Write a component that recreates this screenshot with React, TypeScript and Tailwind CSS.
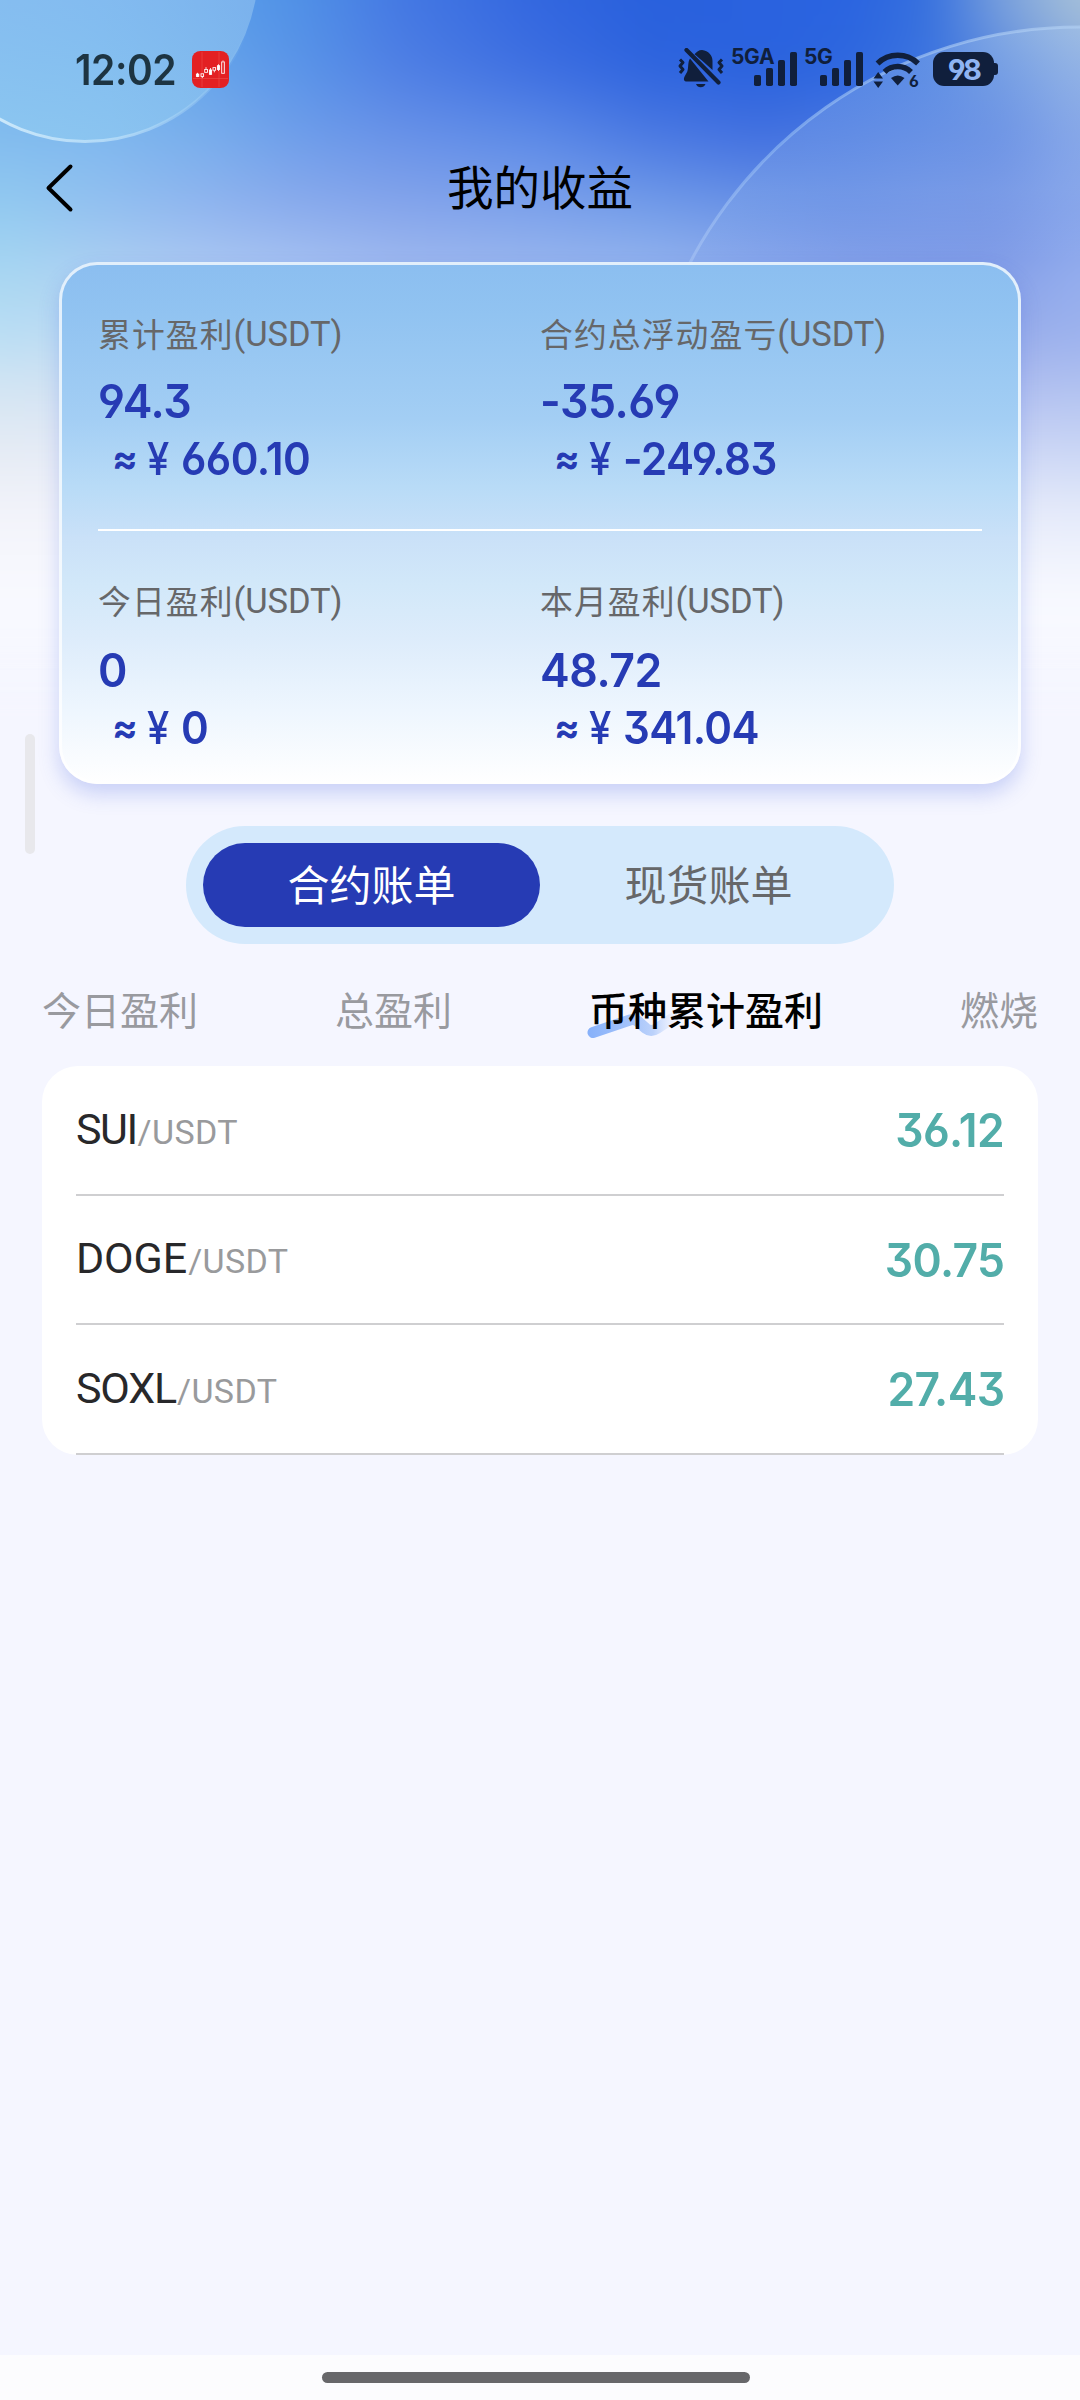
import React from "react";

// Colour rows of the header backdrop: each row is a horizontal gradient placed at height y.
const xs = [0, 100, 200, 300, 400, 540, 650, 760, 850, 930, 1000, 1080];
const rows: { y: number; c: string[] }[] = [
  { y: 0, c: ["#6aaeee", "#64aaee", "#5a9fea", "#5090e6", "#4478e3", "#3266df", "#2860dc", "#2a62df", "#2a64e0", "#3670de", "#79a0dd", "#a8c2d8"] },
  { y: 68, c: ["#74b4ee", "#70b2ee", "#68a6ea", "#5a94e8", "#4f7fe4", "#3d6ee1", "#2e64de", "#2a62de", "#2e67df", "#3c74df", "#5c8ade", "#88a9e0"] },
  { y: 136, c: ["#82bcee", "#80b8ee", "#78aeec", "#6e9dea", "#6892e8", "#5c8ae7", "#4b79e2", "#4270e0", "#4877e1", "#507de1", "#5780e1", "#7b9ce6"] },
  { y: 205, c: ["#92caf0", "#92c0f0", "#90b5ef", "#89aaec", "#84a4eb", "#7ca1eb", "#729ce9", "#6992e6", "#668de5", "#6d90e5", "#7090e4", "#819fea"] },
  { y: 268, c: ["#a6d6f2", "#accff2", "#abc8f2", "#a6c2f2", "#9fb9ef", "#98b6ee", "#94b4ee", "#8ca9ec", "#86a2e9", "#829ee8", "#829de7", "#94aeee"] },
  { y: 335, c: ["#badef3", "#bcdaf3", "#b8d0f2", "#b4c8f2", "#b0c4f2", "#a8c0f2", "#a4bcf0", "#9cb4ee", "#94acec", "#92a8ea", "#98ace9", "#9cb2ee"] },
  { y: 390, c: ["#d4e5f3", "#d4e3f3", "#d0e0f4", "#d0dcf4", "#ccd8f4", "#c8d6f4", "#c4d4f4", "#c0d0f4", "#bccaf2", "#b8c4f0", "#b2c0f0", "#b2c2f0"] },
  { y: 450, c: ["#e5ebf4", "#e6ebf6", "#e4eaf6", "#e4e8f6", "#e2e8f6", "#e0e8f6", "#dce6f6", "#d8e2f6", "#d4def6", "#d0daf4", "#ccd6f5", "#cad6f5"] },
  { y: 510, c: ["#f2f3fa", "#f2f3fa", "#f2f3fa", "#f2f3fa", "#f2f3fa", "#f0f3fa", "#f0f3fa", "#ecf0fa", "#eaeefa", "#e8edfa", "#e6ebfa", "#e4eafa"] },
  { y: 600, c: Array(12).fill("#f9faff") },
  { y: 680, c: Array(12).fill("#f5f6ff") },
];

function Backdrop() {
  return (
    <svg className="absolute left-0 top-0" width="1080" height="720" viewBox="0 0 1080 720" aria-hidden="true">
      <defs>
        {rows.map((r, i) => {
          const next = rows[i + 1]?.y ?? 720;
          return (
            <React.Fragment key={i}>
              <linearGradient id={`row${i}`} gradientUnits="userSpaceOnUse" x1="0" x2="1080" y1="0" y2="0">
                {r.c.map((c, k) => (
                  <stop key={k} offset={xs[k] / 1080} stopColor={c} />
                ))}
              </linearGradient>
              <linearGradient id={`fade${i}`} gradientUnits="userSpaceOnUse" x1="0" x2="0" y1={r.y} y2={next}>
                <stop offset="0" stopColor="#fff" stopOpacity="1" />
                <stop offset="1" stopColor="#fff" stopOpacity="0" />
              </linearGradient>
              <mask id={`mask${i}`} maskUnits="userSpaceOnUse" x="-120" y="-120" width="1320" height="960" style={{ maskType: "alpha" }}>
                <rect x="-120" y="-120" width="1320" height="960" fill={`url(#fade${i})`} />
              </mask>
            </React.Fragment>
          );
        })}
        <filter id="soft" filterUnits="userSpaceOnUse" x="-120" y="-120" width="1320" height="960" colorInterpolationFilters="sRGB">
          <feGaussianBlur stdDeviation="22" />
        </filter>
        <linearGradient id="ringL" gradientUnits="userSpaceOnUse" x1="0" y1="120" x2="250" y2="40">
          <stop offset="0" stopColor="#d2ecfc" stopOpacity="0.9" />
          <stop offset="0.45" stopColor="#bce0f9" stopOpacity="0.7" />
          <stop offset="1" stopColor="#a0d0f5" stopOpacity="0" />
        </linearGradient>
        <linearGradient id="fillL" gradientUnits="userSpaceOnUse" x1="0" y1="0" x2="0" y2="143">
          <stop offset="0" stopColor="#a0ccf2" stopOpacity="0.5" />
          <stop offset="1" stopColor="#94d0f2" stopOpacity="0.5" />
        </linearGradient>
        <linearGradient id="ringR" gradientUnits="userSpaceOnUse" x1="0" y1="27" x2="0" y2="262">
          <stop offset="0" stopColor="#b4d2f5" stopOpacity="0.6" />
          <stop offset="0.5" stopColor="#8ab4f2" stopOpacity="0.7" />
          <stop offset="1" stopColor="#c0d8fa" stopOpacity="0.35" />
        </linearGradient>
        <linearGradient id="fillR" gradientUnits="userSpaceOnUse" x1="0" y1="27" x2="0" y2="260">
          <stop offset="0" stopColor="#a8c8f0" stopOpacity="0.35" />
          <stop offset="0.7" stopColor="#a8c8f0" stopOpacity="0.22" />
          <stop offset="1" stopColor="#a8c8f0" stopOpacity="0" />
        </linearGradient>
      </defs>
      <g filter="url(#soft)">
        {rows
          .map((_, i) => <rect key={i} x="-120" y="-120" width="1320" height="960" fill={`url(#row${i})`} mask={`url(#mask${i})`} />)
          .reverse()}
        <rect x="-120" y="720" width="1320" height="120" fill="#f5f6ff" />
      </g>
      <circle cx="85" cy="-32" r="173.500" fill="url(#fillL)" stroke="url(#ringL)" strokeWidth="3" />
      <circle cx="1080" cy="467" r="440" fill="url(#fillR)" />
      <path d="M665 320 A440 440 0 0 1 1080 27" fill="none" stroke="url(#ringR)" strokeWidth="3" />
    </svg>
  );
}

const ink = "#101f3c";

function Bars() {
  return (
    <svg width="43" height="34" viewBox="0 0 43 34" fill={ink}>
      <rect x="0" y="23" width="7" height="11" rx="1.8" />
      <rect x="12" y="16" width="7" height="18" rx="1.8" />
      <rect x="24" y="8" width="7" height="26" rx="1.8" />
      <rect x="36" y="0" width="7" height="34" rx="1.8" />
    </svg>
  );
}

function StatusBar() {
  return (
    <div className="flex h-[138px] items-start pl-[75px] pr-[82px] pt-[48px]">
      <span className="-mt-[2px] w-[117px] origin-left scale-x-[0.93] whitespace-nowrap font-['Inter'] text-[42px] font-semibold leading-[47px] tracking-[-0.5px] text-[#1d3442]">12:02</span>
      <svg className="mt-[3px]" width="37" height="37" viewBox="0 0 37 39" preserveAspectRatio="none">
        <rect width="37" height="39" rx="8.5" fill="#e32023" />
        <g stroke="#f0655f" strokeWidth="0.6" opacity="0.7">
          <path d="M10 1V38M27 1V38M1 29H36" />
        </g>
        <g fill="#fff" stroke="#fff" strokeWidth="0.9">
          <path d="M5.500 23V27.500M18.500 18V25M26.500 14V21" />
          <rect x="4.400" y="24.300" width="2.400" height="2.600" />
          <rect x="17.400" y="20" width="2.200" height="4.600" />
          <rect x="25.400" y="15.500" width="2.200" height="4" />
          <g fill="none">
            <rect x="9" y="24" width="2.600" height="2.800" />
            <rect x="12.700" y="19.500" width="2.800" height="3" />
            <rect x="21" y="17.500" width="2.600" height="2.800" />
            <rect x="29.700" y="11.500" width="2.600" height="12" />
            <path d="M14 17V19M22.300 20.500V22.500M10.300 27V28.500M31 10V11" />
          </g>
        </g>
      </svg>
      <div className="ml-auto flex items-start">
        <svg width="46" height="40" viewBox="0 0 46 40" fill={ink}>
          <path d="M12 10.500C9.500 14 10.800 20 9.200 23.800L6.600 28.500C5.200 31.500 6 33.500 9 33.500H30.500Z" />
          <path d="M16.500 6.200C19 4 20.500 2 24 2C30.500 3 34.500 7 34.500 13V22C31 18.500 22 10.800 16.500 6.200Z" />
          <path d="M18 36H27.500C26.500 38.300 25 39.300 22.700 39.300S19 38.300 18 36Z" />
          <path d="M8.500 2L40.500 34.500" stroke={ink} strokeWidth="4.200" strokeLinecap="round" />
          <path d="M2 11.500L5 14.500L2 18L5 21.500L2 25" fill="none" stroke={ink} strokeWidth="3" strokeLinejoin="round" />
          <path d="M44 11.500L41 14.500L44 18L41 21.500L44 25" fill="none" stroke={ink} strokeWidth="3" strokeLinejoin="round" />
        </svg>
        <div className="relative ml-[30px] mt-[4px] h-[34px]">
          <span className="absolute -left-[23px] -top-[7px] whitespace-nowrap font-['Inter'] text-[21px] font-bold leading-[24px] tracking-[-0.3px] text-[#101f3c]">5GA</span>
          <Bars />
        </div>
        <div className="relative ml-[23px] mt-[4px] h-[34px]">
          <span className="absolute -left-[16px] -top-[7px] font-['Inter'] text-[21px] font-bold leading-[24px] tracking-[-0.5px] text-[#101f3c]">5G</span>
          <Bars />
        </div>
        <svg className="ml-[10px] mt-[4px] overflow-visible" width="50" height="40" viewBox="0 0 50 40" fill={ink}>
          <path d="M4.500 11.500A29 29 0 0 1 45 11.500" fill="none" stroke={ink} strokeWidth="5.500" />
          <path d="M11.500 20A19 19 0 0 1 38 20" fill="none" stroke={ink} strokeWidth="5.500" />
          <path d="M18 26Q24.700 21 31.500 26L24.700 33.500Z" />
          <path d="M0.500 26.500L5.200 20L10 26.500ZM0.500 29.500L5.200 36L10 29.500Z" />
          <text x="36" y="35" fontFamily="Inter" fontWeight="700" fontSize="16" className="[font-feature-settings:'cv03']">6</text>
        </svg>
        <div className="ml-[10px] mt-[4px] flex items-center">
          <div className="flex h-[34px] w-[61px] items-center justify-center rounded-[11px] bg-[#101f3c] font-['Inter'] text-[29px] font-bold leading-none tracking-[-2.500px] text-[#8fb4f2] [font-feature-settings:'cv04']">98</div>
          <div className="h-[12px] w-[4px] rounded-r-[3px] bg-[#101f3c]" />
        </div>
      </div>
    </div>
  );
}

const num = "font-['Inter'] font-semibold [font-feature-settings:'cv03','cv04','cv09']";

function Stat({ label, value, cny, gap }: { label: string; value: string; cny: string; gap: string }) {
  return (
    <div className="flex flex-col text-[#263bb4]">
      <div className="flex h-[44px] items-center whitespace-nowrap text-[32.800px] leading-[44px] tracking-[1.100px] text-[#666769]">
        {label}
        <span className="pt-px font-['Roboto'] text-[34.500px] tracking-[-0.100px]">(USDT)</span>
      </div>
      <div className={gap}>
        <div className={`${num} h-[60px] origin-left scale-x-[0.96] whitespace-pre text-[46.500px] leading-[60px] tracking-[-0.500px]`}>{value}</div>
      </div>
      <div className={`${num} flex h-[60px] items-center whitespace-nowrap pl-[14px] text-[45.500px] leading-[60px]`}>
        <span className="-mt-[2px] w-[35px] text-[38px] font-bold">≈</span>
        <span className="w-[34px] origin-left scale-x-[0.88] font-medium">¥</span>
        <span className="origin-left scale-x-[0.925] tracking-[-0.600px]">{cny}</span>
      </div>
    </div>
  );
}

function Card() {
  return (
    <section className="mx-[59px] h-[522px] rounded-[38px] border-[3px] border-white/75 bg-[linear-gradient(180deg,#8bbef0_0%,#91c3f1_10%,#a3cef4_30%,#b8dbf7_43%,#cae1f8_53%,#d2e8f9_62%,#ddecfb_72%,#eef6fe_86%,#ffffff_100%)] bg-origin-border px-[36px] pt-[46px] shadow-[0_10px_20px_rgba(70,100,225,0.25)]">
      <div className="grid grid-cols-2 border-b-[2px] border-white pb-[40px]">
        <Stat label="累计盈利" value="94.3" cny="660.10" gap="mt-[16px] h-[58px]" />
        <Stat label="合约总浮动盈亏" value="-35.69" cny="-249.83" gap="mt-[16px] h-[58px]" />
      </div>
      <div className="grid grid-cols-2 pt-[47px]">
        <Stat label="今日盈利" value="0" cny="0" gap="mt-[18px] h-[58px]" />
        <Stat label="本月盈利" value="48.72" cny="341.04" gap="mt-[18px] h-[58px]" />
      </div>
    </section>
  );
}

const coins = [
  { name: "SUI", value: "36.12", h: "h-[130px]", track: "tracking-[-1.500px]" },
  { name: "DOGE", value: "30.75", h: "h-[129px]", track: "tracking-[-0.100px]" },
  { name: "SOXL", value: "27.43", h: "h-[130px]", track: "tracking-[-1.200px]" },
];

export default function App() {
  return (
    <div className="relative flex h-[2400px] w-[1080px] flex-col overflow-hidden bg-[#f5f6ff] font-['Noto_Sans_CJK_SC',sans-serif]">
      <Backdrop />
      <div className="relative flex flex-1 flex-col">
        <StatusBar />
        <header className="grid h-[124px] grid-cols-[1fr_auto_1fr] items-start">
          <svg className="ml-[40px] mt-[22px]" width="40" height="56" viewBox="0 0 40 56" fill="none" stroke="#000" strokeWidth="4" strokeLinecap="round" strokeLinejoin="round">
            <path d="M30.500 6.500L8.500 28L30.500 49.500" />
          </svg>
          <h1 className="mt-[14px] text-[46.500px] leading-[66px] text-black">我的收益</h1>
        </header>
        <Card />
        <div className="mx-auto mt-[42px] flex h-[118px] w-[708px] items-center rounded-full bg-[#d4e9fc] px-[17px] text-[42px] leading-[60px]">
          <div className="flex h-[84px] w-[337px] items-center justify-center rounded-full bg-[#263bb4] pb-[4px] text-white">合约账单</div>
          <div className="flex h-[84px] w-[337px] items-center justify-center pb-[4px] text-[#666769]">现货账单</div>
        </div>
        <nav className="mx-[42px] mt-[34px] flex h-[60px] justify-between text-[39px] leading-[60px] text-[#999a9f]">
          <span>今日盈利</span>
          <span>总盈利</span>
          <span className="relative font-medium text-black">
            <svg className="absolute -left-[3px] top-[32px]" width="94" height="30" viewBox="0 0 94 30" fill="none">
              <defs>
                <linearGradient id="wave" x1="0" x2="90" y1="0" y2="0" gradientUnits="userSpaceOnUse">
                  <stop offset="0" stopColor="#86b0fa" />
                  <stop offset="0.500" stopColor="#a4c3fa" />
                  <stop offset="0.750" stopColor="#bcd2fb" />
                  <stop offset="1" stopColor="#d5e2fc" stopOpacity="0.1" />
                </linearGradient>
              </defs>
              <path d="M7 22.500L44 10Q49 8.500 52 11.500L60 18.500Q65 22.500 71 18.500L87 8" stroke="url(#wave)" strokeWidth="11" strokeLinecap="round" strokeLinejoin="round" />
            </svg>
            <span className="relative">币种累计盈利</span>
          </span>
          <span>燃烧</span>
        </nav>
        <section className="mx-[42px] mt-[28px] rounded-[36px] bg-white px-[34px]">
          {coins.map((c) => (
            <div key={c.name} className={`flex ${c.h} items-center justify-between border-b-[2px] border-[#cfcfd1]`}>
              <div className="flex items-baseline font-['Roboto'] text-[43px] leading-[60px] text-[#28282a]">
                <span className={c.track}>{c.name}</span>
                <span className="pl-px text-[34px] tracking-[0.400px] text-[#999a9c]">/USDT</span>
              </div>
              <div className={`${num} origin-right scale-x-[0.955] text-[46.500px] leading-[60px] tracking-[-0.600px] text-[#52ada9]`}>{c.value}</div>
            </div>
          ))}
        </section>
        <div className="mt-auto flex h-[45px] justify-center bg-[#fcfcfe] pr-[8px] pt-[17px]">
          <div className="h-[11px] w-[428px] rounded-full bg-[#67676a]" />
        </div>
      </div>
      <div className="absolute left-[25px] top-[734px] h-[120px] w-[10px] rounded-full bg-[#e8e8ec]" />
    </div>
  );
}
